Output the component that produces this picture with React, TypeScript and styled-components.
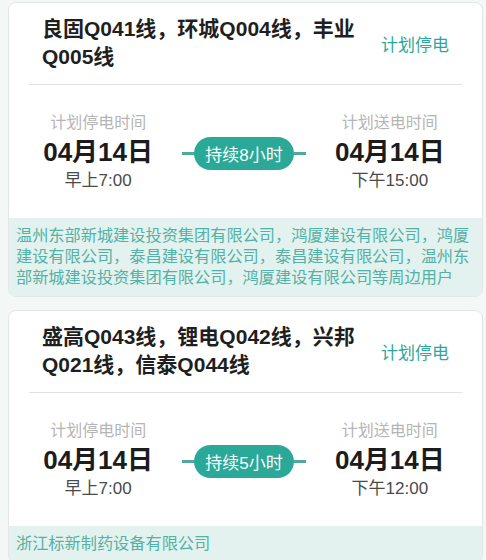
import styled, { createGlobalStyle } from 'styled-components';

type Outage = {
  id: number;
  lines: string;
  status: string;
  startDate: string;
  startTime: string;
  endDate: string;
  endTime: string;
  duration: string;
  area: string;
};

const outages: Outage[] = [
  {
    id: 1,
    lines: '良固Q041线，环城Q004线，丰业Q005线',
    status: '计划停电',
    startDate: '04月14日',
    startTime: '早上7:00',
    endDate: '04月14日',
    endTime: '下午15:00',
    duration: '持续8小时',
    area:
      '温州东部新城建设投资集团有限公司，鸿厦建设有限公司，鸿厦建设有限公司，泰昌建设有限公司，泰昌建设有限公司，温州东部新城建设投资集团有限公司，鸿厦建设有限公司等周边用户',
  },
  {
    id: 2,
    lines: '盛高Q043线，锂电Q042线，兴邦Q021线，信泰Q044线',
    status: '计划停电',
    startDate: '04月14日',
    startTime: '早上7:00',
    endDate: '04月14日',
    endTime: '下午12:00',
    duration: '持续5小时',
    area: '浙江标新制药设备有限公司',
  },
];

const GlobalStyle = createGlobalStyle`
  html, body {
    margin: 0;
    padding: 0;
    background: #f3f8f7;
    font-family: "Liberation Sans", "Noto Sans CJK SC", sans-serif;
  }
`;

const App = () => {
  return (
    <>
      <GlobalStyle />
      <List>
        {outages.map((o) => (
          <Card key={o.id}>
            <Header>
              <LineTitle>{o.lines}</LineTitle>
              <Status>{o.status}</Status>
            </Header>
            <TimeRow>
              <TimeCol>
                <TimeLabel>计划停电时间</TimeLabel>
                <DateText>{o.startDate}</DateText>
                <ClockText>{o.startTime}</ClockText>
              </TimeCol>
              <Connector>
                <Dash />
                <DurationPill>{o.duration}</DurationPill>
                <Dash />
              </Connector>
              <TimeCol>
                <TimeLabel>计划送电时间</TimeLabel>
                <DateText>{o.endDate}</DateText>
                <ClockText>{o.endTime}</ClockText>
              </TimeCol>
            </TimeRow>
            <Area>{o.area}</Area>
          </Card>
        ))}
      </List>
    </>
  );
};

export default App;

const List = styled.div`
  display: flex;
  flex-direction: column;
  gap: 13px;
  padding: 2px 3px 12px 8px;
`;

const Card = styled.div`
  background: #ffffff;
  border: 1px solid #e2e8e7;
  border-radius: 8px;
  overflow: hidden;
`;

const Header = styled.div`
  display: flex;
  align-items: center;
  margin: 0 20px;
  padding: 12px 13px 13px;
  border-bottom: 1px solid #e2e2e2;
`;

const LineTitle = styled.div`
  flex: 1;
  margin-right: 20px;
  font-size: 21px;
  line-height: 28px;
  font-weight: 700;
  color: #1f1f1f;
`;

const Status = styled.div`
  flex-shrink: 0;
  font-size: 17px;
  color: #2ba89a;
`;

const TimeRow = styled.div`
  display: grid;
  grid-template-columns: 1fr auto 1fr;
  align-items: center;
  padding: 28px 8px 27px 5px;
`;

const TimeCol = styled.div`
  display: flex;
  flex-direction: column;
  align-items: center;
`;

const TimeLabel = styled.div`
  font-size: 16px;
  line-height: 20px;
  color: #b5b5b5;
`;

const DateText = styled.div`
  margin-top: 4px;
  font-size: 26px;
  line-height: 30px;
  font-weight: 700;
  color: #1c1c1c;
`;

const ClockText = styled.div`
  margin-top: 3px;
  font-size: 17px;
  line-height: 21px;
  color: #4a4a4a;
`;

const Connector = styled.div`
  display: flex;
  align-items: center;
  margin-top: 2px;
`;

const Dash = styled.span`
  width: 12px;
  height: 3px;
  background: #4fa99e;
`;

const DurationPill = styled.span`
  height: 33px;
  padding: 0 11px;
  display: flex;
  align-items: center;
  border-radius: 17px;
  background: #2aa898;
  color: #ffffff;
  font-size: 17px;
  white-space: nowrap;
`;

const Area = styled.div`
  background: #e3f1ef;
  padding: 7px 7px 8px;
  font-size: 16.2px;
  line-height: 21px;
  color: #52b2a5;
`;
